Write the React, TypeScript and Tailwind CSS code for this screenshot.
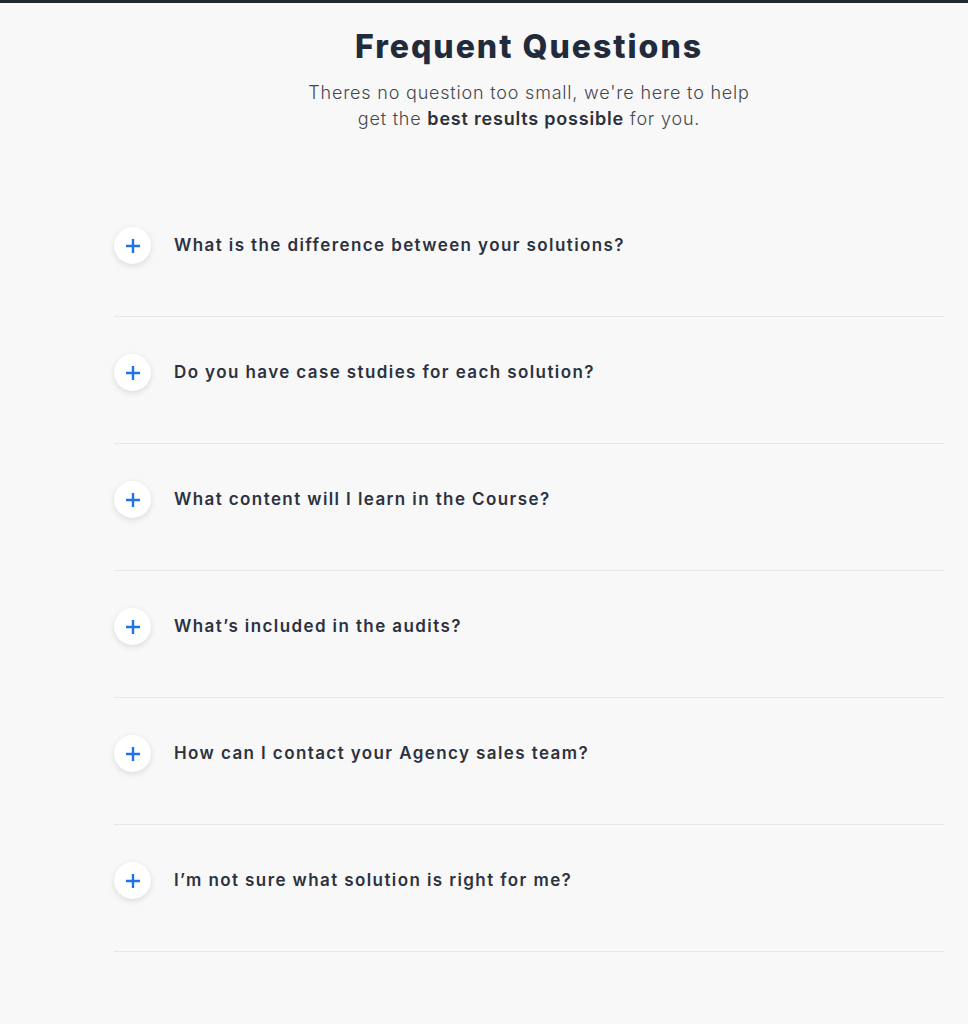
import React from "react";

const questions = [
  "What is the difference between your solutions?",
  "Do you have case studies for each solution?",
  "What content will I learn in the Course?",
  "What’s included in the audits?",
  "How can I contact your Agency sales team?",
  "I’m not sure what solution is right for me?",
];

function PlusIcon() {
  return (
    <svg width="14" height="14" viewBox="0 0 14 14" fill="none">
      <path d="M7 0.5V13.5M0.5 7H13.5" stroke="#1f73ea" strokeWidth="2.4" strokeLinecap="round" />
    </svg>
  );
}

export default function App() {
  return (
    <div
      className="min-h-[1024px] w-full bg-[#f8f8f8] border-t-[3px] border-[#1f282c]"
      style={{ fontFamily: "Inter, 'Open Sans', sans-serif" }}
    >
      <div className="pl-[114px] pr-[24px]">
        <div className="flex flex-col items-center pt-[24px]">
          <h1 className="text-[32px] leading-[40px] font-extrabold text-[#222b3b] tracking-[2px]">
            Frequent Questions
          </h1>
          <p className="mt-[13px] text-center text-[18px] leading-[26px] font-light text-[#45494f] tracking-[0.8px]">
            Theres no question too small, we're here to help
            <br />
            get the <span className="font-semibold text-[#2b303a]">best results possible</span> for you.
          </p>
        </div>
        <div className="mt-[58px]">
          {questions.map((q) => (
            <div key={q} className="flex items-start pt-[37px] pb-[52px] border-b border-[#e7e7e7]">
              <div className="w-[37px] h-[37px] rounded-full bg-white shadow-[0_2px_6px_rgba(0,0,0,0.12)] flex items-center justify-center shrink-0">
                <PlusIcon />
              </div>
              <div className="ml-[23px] h-[37px] flex items-center text-[17px] font-semibold text-[#2d3240] tracking-[1.4px]">
                {q}
              </div>
            </div>
          ))}
        </div>
      </div>
    </div>
  );
}
